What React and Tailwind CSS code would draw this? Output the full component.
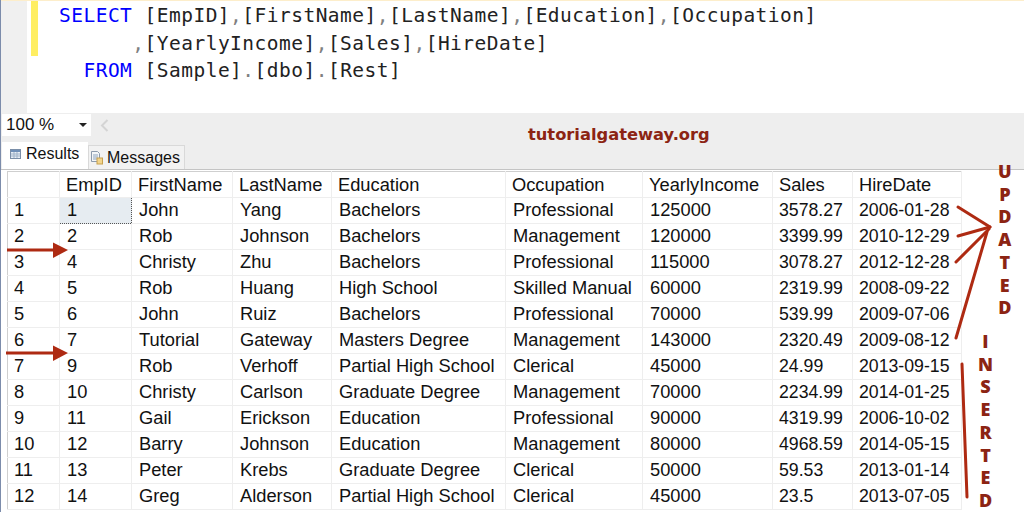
import React from 'react';

const columns = [
    { name: 'EmpID', width: 'w-[72px]' },
    { name: 'FirstName', width: 'w-[101px]' },
    { name: 'LastName', width: 'w-[99px]' },
    { name: 'Education', width: 'w-[174px]' },
    { name: 'Occupation', width: 'w-[137px]' },
    { name: 'YearlyIncome', width: 'w-[130px]' },
    { name: 'Sales', width: 'w-[80px]' },
    { name: 'HireDate', width: 'w-[109px]' },
];

const rows = [
    ['1', 'John', 'Yang', 'Bachelors', 'Professional', '125000', '3578.27', '2006-01-28'],
    ['2', 'Rob', 'Johnson', 'Bachelors', 'Management', '120000', '3399.99', '2010-12-29'],
    ['4', 'Christy', 'Zhu', 'Bachelors', 'Professional', '115000', '3078.27', '2012-12-28'],
    ['5', 'Rob', 'Huang', 'High School', 'Skilled Manual', '60000', '2319.99', '2008-09-22'],
    ['6', 'John', 'Ruiz', 'Bachelors', 'Professional', '70000', '539.99', '2009-07-06'],
    ['7', 'Tutorial', 'Gateway', 'Masters Degree', 'Management', '143000', '2320.49', '2009-08-12'],
    ['9', 'Rob', 'Verhoff', 'Partial High School', 'Clerical', '45000', '24.99', '2013-09-15'],
    ['10', 'Christy', 'Carlson', 'Graduate Degree', 'Management', '70000', '2234.99', '2014-01-25'],
    ['11', 'Gail', 'Erickson', 'Education', 'Professional', '90000', '4319.99', '2006-10-02'],
    ['12', 'Barry', 'Johnson', 'Education', 'Management', '80000', '4968.59', '2014-05-15'],
    ['13', 'Peter', 'Krebs', 'Graduate Degree', 'Clerical', '50000', '59.53', '2013-01-14'],
    ['14', 'Greg', 'Alderson', 'Partial High School', 'Clerical', '45000', '23.5', '2013-07-05'],
];

const Punct = ({ children }) => <span className="text-[#808080]">{children}</span>;

const Keyword = ({ children }) => <span className="text-[#0000ff]">{children}</span>;

const GridIcon = () => (
    <svg width="11" height="10" viewBox="0 0 11 10" className="shrink-0">
        <rect x="0.500" y="0.500" width="10" height="9" fill="#e8eef6" stroke="#7a8ea8" />
        <rect x="1" y="1" width="9" height="2" fill="#6f8fb8" />
        <path d="M4 3v6M7 3v6M1 5h9M1 7h9" stroke="#9fb2c8" strokeWidth="1" />
    </svg>
);

const MessageIcon = () => (
    <svg width="12" height="14" viewBox="0 0 12 14" className="shrink-0">
        <path d="M0.500 0.500h6l2 2v8h-8z" fill="#f4f6f8" stroke="#8d9bad" />
        <path d="M2 4h5M2 6h5M2 8h4" stroke="#8da3bd" strokeWidth="1" />
        <rect x="6" y="7" width="5.500" height="6" fill="#f2d58c" stroke="#c7a04e" />
    </svg>
);

// red marks drawn over the grid
const Annotations = () => (
    <svg width="1024" height="512" viewBox="0 0 1024 512" className="absolute left-0 top-0 pointer-events-none">
        <g fill="#ae2a12" stroke="none">
            <path d="M6 248.500h46v-6l15 7.500-15 8v-6.500h-46z" />
            <path d="M5 351.500h47v-6l15 7.500-15 8v-6.500h-47z" />
        </g>
        <g fill="none" stroke="#ae2a12" strokeWidth="3" strokeLinecap="round">
            <path d="M957 207L989 227" />
            <path d="M957 236L989 227" />
            <path d="M955 262L988 229" />
            <path d="M955 338L986 232" />
            <path d="M961 364L966 497" />
        </g>
    </svg>
);

const StackedLetters = ({ word, className }) => (
    <div className={`absolute flex flex-col items-center font-['Open_Sans',sans-serif] font-extrabold text-[18px] leading-[22.700px] text-[#8c2413] ${className}`}>
        {word.split('').map((letter, i) => (
            <span key={i}>{letter}</span>
        ))}
    </div>
);

export default function App() {
    return (
        <div className="relative w-[1024px] h-[512px] overflow-hidden bg-white border-l border-[#7c8cab] font-['Liberation_Sans',sans-serif] text-[#111]">
            {/* Query editor */}
            <div className="flex h-[113px] border-t border-[#fdeecb]">
                <div className="w-[26px] shrink-0 bg-[#f0f0f0]" />
                <div className="ml-[4px] h-[55px] w-[7px] shrink-0 bg-[#ffee62]" />
                <pre className="pl-[21px] font-['DejaVu_Sans_Mono',monospace] text-[19.500px] leading-[27.500px] tracking-[0.480px] text-[#222] pt-[1px]">
                    <Keyword>SELECT</Keyword> [EmpID]<Punct>,</Punct>[FirstName]<Punct>,</Punct>[LastName]<Punct>,</Punct>[Education]<Punct>,</Punct>[Occupation]{'\n'}
                    {'      '}<Punct>,</Punct>[YearlyIncome]<Punct>,</Punct>[Sales]<Punct>,</Punct>[HireDate]{'\n'}
                    {'  '}<Keyword>FROM</Keyword> [Sample]<Punct>.</Punct>[dbo]<Punct>.</Punct>[Rest]
                </pre>
            </div>

            {/* Zoom bar and tabs */}
            <div className="relative h-[57px] bg-[#eeeeee] border-b border-[#c4c4c4]">
                <div className="flex items-center gap-[9px] pt-[1px]">
                    <div className="ml-[1px] flex h-[22px] w-[89px] items-center justify-between bg-white pl-[4px] pr-[4px] text-[17px]">
                        <span>100 %</span>
                        <span className="h-0 w-0 border-x-[4.500px] border-t-[4px] border-x-transparent border-t-[#222]" />
                    </div>
                    <svg width="9" height="13" viewBox="0 0 9 13">
                        <path d="M7.500 1L2 6.500L7.500 12" fill="none" stroke="#d4d4d4" strokeWidth="2" />
                    </svg>
                </div>
                <div className="absolute bottom-0 left-[1px] flex items-end">
                    <div className="flex h-[27px] w-[86px] items-center gap-[5px] bg-white pl-[8px] pb-[4px] text-[16px]">
                        <GridIcon />
                        <span>Results</span>
                    </div>
                    <div className="flex h-[24px] w-[97px] items-center gap-[4px] border border-b-0 border-[#d9d9d9] bg-[#f2f2f2] pl-[2px] text-[16px]">
                        <MessageIcon />
                        <span>Messages</span>
                    </div>
                </div>
                <span className="absolute left-[527px] top-[11px] font-['DejaVu_Sans',sans-serif] font-bold text-[16.300px] leading-[22px] text-[#8c2413]">
                    tutorialgateway.org
                </span>
            </div>

            {/* Results grid */}
            <div className="pl-[6px] pt-[1px]">
                <table className="table-fixed border-collapse text-[18.300px] leading-[24px] border-l border-t border-[#cfcfcf]">
                    <thead>
                        <tr className="h-[26px]">
                            <th className="w-[52px] border-r border-b border-[#eeeeee] p-0" />
                            {columns.map((col) => (
                                <th
                                    key={col.name}
                                    className={`${col.width} border-r border-b border-[#eeeeee] pl-[6px] text-left font-normal`}
                                >
                                    {col.name}
                                </th>
                            ))}
                        </tr>
                    </thead>
                    <tbody>
                        {rows.map((row, r) => (
                            <tr key={r} className="h-[26px]">
                                <td className="border-r border-b border-[#eeeeee] pl-[6px] pb-[1px]">{r + 1}</td>
                                {row.map((cell, c) => (
                                    <td
                                        key={c}
                                        className={
                                            r === 0 && c === 0
                                                ? 'border border-dotted border-[#555] bg-[#e6ecf1] pl-[7px] pb-[1px]'
                                                : c >= 6
                                                  ? 'border-r border-b border-[#eeeeee] pl-[6px] pb-[1px] text-[17.700px]'
                                                  : 'border-r border-b border-[#eeeeee] pl-[7px] pb-[1px]'
                                        }
                                    >
                                        {cell}
                                    </td>
                                ))}
                            </tr>
                        ))}
                    </tbody>
                </table>
            </div>

            <Annotations />
            <StackedLetters word="UPDATED" className="left-[997px] top-[160px]" />
            <StackedLetters word="INSERTED" className="left-[977px] top-[330px]" />
        </div>
    );
}
